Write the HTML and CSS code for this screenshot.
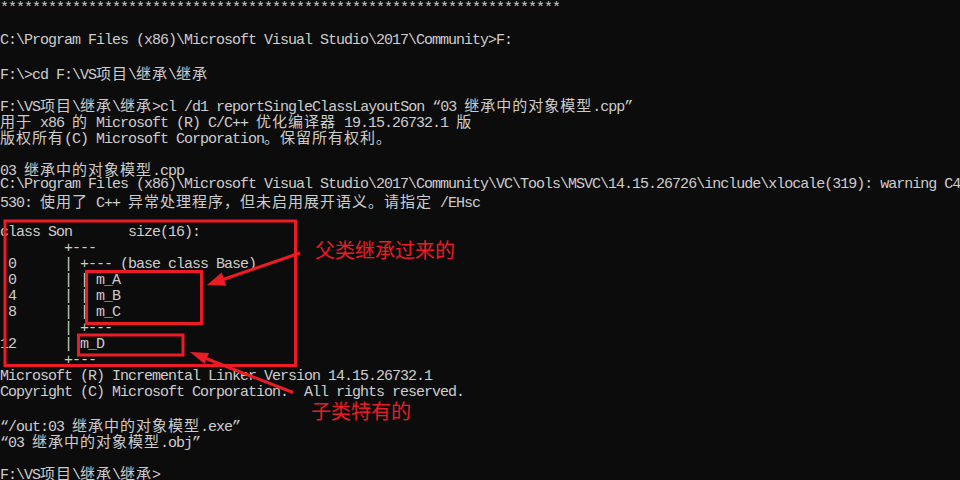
FILE: index.html
```html
<!DOCTYPE html>
<html lang="zh-CN">
<head>
<meta charset="utf-8">
<title>cl /d1 reportSingleClassLayoutSon</title>
<link rel="stylesheet" href="styles.css">
</head>
<body>
<div class="console">
<div class="ln">**********************************************************************</div>
<div class="ln"></div>
<div class="ln">C:\Program Files (x86)\Microsoft Visual Studio\2017\Community&gt;F:</div>
<div class="ln"></div>
<div class="ln">F:\&gt;cd F:\VS<span class="cj">项目</span>\<span class="cj">继承</span>\<span class="cj">继承</span></div>
<div class="ln"></div>
<div class="ln">F:\VS<span class="cj">项目</span>\<span class="cj">继承</span>\<span class="cj">继承</span>&gt;cl /d1 reportSingleClassLayoutSon “03 <span class="cj">继承中的对象模型</span>.cpp”</div>
<div class="ln"><span class="cj">用于</span> x86 <span class="cj">的</span> Microsoft (R) C/C++ <span class="cj">优化编译器</span> 19.15.26732.1 <span class="cj">版</span></div>
<div class="ln"><span class="cj">版权所有</span>(C) Microsoft Corporation<span class="cj">。保留所有权利。</span></div>
<div class="ln"></div>
<div class="ln">03 <span class="cj">继承中的对象模型</span>.cpp</div>
<div class="ln">C:\Program Files (x86)\Microsoft Visual Studio\2017\Community\VC\Tools\MSVC\14.15.26726\include\xlocale(319): warning C4</div>
<div class="ln">530: <span class="cj">使用了</span> C++ <span class="cj">异常处理程序，但未启用展开语义。请指定</span> /EHsc</div>
<div class="ln"></div>
<div class="ln">class Son       size(16):</div>
<div class="ln">        +---</div>
<div class="ln"> 0      | +--- (base class Base)</div>
<div class="ln"> 0      | | m_A</div>
<div class="ln"> 4      | | m_B</div>
<div class="ln"> 8      | | m_C</div>
<div class="ln">        | +---</div>
<div class="ln">12      | m_D</div>
<div class="ln">        +---</div>
<div class="ln">Microsoft (R) Incremental Linker Version 14.15.26732.1</div>
<div class="ln">Copyright (C) Microsoft Corporation.  All rights reserved.</div>
<div class="ln"></div>
<div class="ln">“/out:03 <span class="cj">继承中的对象模型</span>.exe”</div>
<div class="ln">“03 <span class="cj">继承中的对象模型</span>.obj”</div>
<div class="ln"></div>
<div class="ln">F:\VS<span class="cj">项目</span>\<span class="cj">继承</span>\<span class="cj">继承</span>&gt;</div>
</div>

<svg class="marks" width="960" height="480" viewBox="0 0 960 480" aria-hidden="true">
  <g fill="none" stroke="#ed1c24" stroke-width="3">
    <rect x="5" y="221" width="290.5" height="144.5"/>
    <rect x="86.5" y="271.5" width="115" height="52"/>
    <rect x="78.5" y="335" width="104.5" height="20"/>
    <line x1="300" y1="253" x2="223" y2="279.5"/>
    <line x1="293" y1="392.5" x2="206" y2="358.5"/>
  </g>
  <g fill="#ed1c24">
    <polygon points="207,285 226.3,285.8 221.7,272.6"/>
    <polygon points="190,352 209,352.9 204.6,364.1"/>
  </g>
</svg>
<div class="note note-base">父类继承过来的</div>
<div class="note note-own">子类特有的</div>
</body>
</html>
```
FILE: styles.css
```css
html, body {
  margin: 0;
  padding: 0;
  background: #0c0c0c;
}

body {
  position: relative;
  width: 960px;
  height: 480px;
  overflow: hidden;
}

.console {
  padding-top: 1px;
  font-family: "Liberation Mono", monospace;
  font-size: 15px;
  letter-spacing: -1px;
  color: #cccccc;
}

.ln {
  height: 16px;
  line-height: 16px;
  white-space: pre;
}

.cj {
  font-family: "Noto Sans CJK SC", sans-serif;
  font-size: 15px;
  letter-spacing: 1px;
}

.marks {
  position: absolute;
  left: 0;
  top: 0;
  pointer-events: none;
}

.note {
  position: absolute;
  color: #ed1c24;
  font-family: "Noto Sans CJK SC", sans-serif;
  font-size: 20px;
  line-height: 20px;
  white-space: nowrap;
}

.note-base {
  left: 315px;
  top: 240px;
}

.note-own {
  left: 311px;
  top: 401px;
}
```
